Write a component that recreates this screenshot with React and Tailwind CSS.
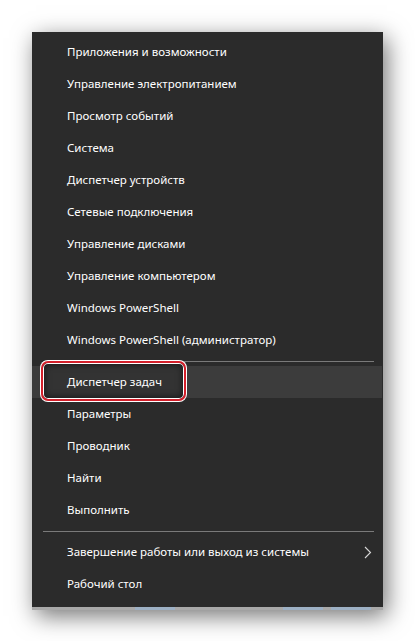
import React from 'react';

const groupA = [
  'Приложения и возможности',
  'Управление электропитанием',
  'Просмотр событий',
  'Система',
  'Диспетчер устройств',
  'Сетевые подключения',
  'Управление дисками',
  'Управление компьютером',
  'Windows PowerShell',
  'Windows PowerShell (администратор)',
];

const groupB = ['Параметры', 'Проводник', 'Найти', 'Выполнить'];

// --- small pieces ---
const Row = ({ children }) => (
  <div className="h-[32px] flex items-center pl-[35px] text-[11.5px] text-white">{children}</div>
);

const Divider = () => (
  <div className="h-[10px] flex items-center pl-[11px] pr-[9px]">
    <div className="h-px w-full bg-[#7a7a7a]" />
  </div>
);

const ChevronRight = (props) => (
  <svg width="8" height="13" viewBox="0 0 8 13" fill="none" stroke="#d8d8d8" strokeWidth="1.1" {...props}>
    <polyline points="1 1 6.5 6.5 1 12" />
  </svg>
);

export default function App() {
  return (
    <div className="w-[415px] h-[641px] bg-white pt-[32px] pl-[32px]" style={{ fontFamily: '"Noto Sans", "Open Sans", sans-serif' }}>
      <div className="w-[351px] shadow-[4px_6px_22px_rgba(0,0,0,0.55)]">
        <div className="bg-[#2b2b2b] pt-[4px] pb-[7px]">
          {groupA.map((t) => <Row key={t}>{t}</Row>)}
          <Divider />

          {/* highlighted item with the red callout */}
          <div className="relative h-[32px] mr-px bg-[#3c3c3c] flex items-center pl-[35px] text-[11.5px] text-white">
            <div className="absolute left-[9px] top-[-5px] w-[145px] h-[40px] rounded-[7px] border-[2.5px] border-[#d4202b] bg-[#333333] shadow-[0_0_0_1px_#ffffff,inset_0_0_0_1px_#ffffff,inset_0_0_6px_2px_rgba(0,0,0,0.5)]" />
            <span className="relative">Диспетчер задач</span>
          </div>

          {groupB.map((t) => <Row key={t}>{t}</Row>)}
          <Divider />
          <div className="h-[32px] flex items-center justify-between pl-[35px] pr-[11px] text-[11.5px] text-white">
            <span>Завершение работы или выход из системы</span>
            <ChevronRight />
          </div>
          <Row>Рабочий стол</Row>
        </div>
        {/* taskbar edge peeking out below the menu */}
        <div className="h-[3px] bg-[#a9a9a9] flex">
          <div className="w-[103px]" />
          <div className="w-[40px] bg-[#9db0c4]" />
          <div className="w-[108px]" />
          <div className="w-[40px] bg-[#9db0c4]" />
          <div className="w-[8px]" />
          <div className="w-[40px] bg-[#9db0c4]" />
        </div>
      </div>
    </div>
  );
}
